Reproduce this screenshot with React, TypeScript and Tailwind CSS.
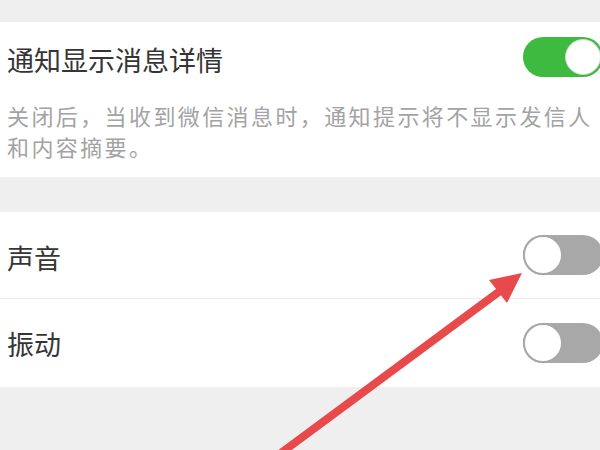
import React from "react";

type ToggleProps = { on: boolean };

// iOS-style switch, cut off by the right edge of the screen
function Toggle({ on }: ToggleProps): React.ReactElement {
  if (on) {
    return (
      <div className="ml-auto mr-[-3px] flex h-[40px] w-[80px] shrink-0 items-center justify-end rounded-full bg-[#3dba3f] pr-[2px]">
        <div className="h-[36px] w-[36px] rounded-full border border-[#cfd8cf] bg-white" />
      </div>
    );
  }
  return (
    <div className="ml-auto mr-[-3px] flex h-[40px] w-[80px] shrink-0 items-center rounded-full bg-[#a8a8a8]">
      <div className="h-[40px] w-[40px] rounded-full border-[2px] border-[#a8a8a8] bg-white" />
    </div>
  );
}

export default function App(): React.ReactElement {
  return (
    <div
      className="relative h-[450px] w-[600px] overflow-hidden bg-[#efefef] pt-[22px]"
      style={{ fontFamily: '"Noto Sans CJK SC", "Noto Sans", sans-serif' }}
    >
      {/* Notification details card */}
      <section className="h-[155px] bg-white pl-[7px]">
        <div className="flex items-start">
          <span className="mt-[24px] text-[27px] leading-[28px] text-[#353535]">通知显示消息详情</span>
          <div className="mt-[15px] ml-auto">
            <Toggle on />
          </div>
        </div>
        <p className="mt-[23px] pr-0 text-[22px] leading-[31px] tracking-[2.4px] text-[#a3a3a3]">
          关闭后，当收到微信消息时，通知提示将不显示发信人和内容摘要。
        </p>
      </section>

      {/* Sound / vibration card */}
      <section className="mt-[35px] bg-white">
        <div className="flex h-[86px] items-center pl-[7px]">
          <span className="mt-[6px] text-[27px] leading-[28px] text-[#353535]">声音</span>
          <Toggle on={false} />
        </div>
        <div className="flex h-[89px] items-center border-t border-[#ededed] pl-[7px]">
          <span className="mt-[2px] text-[27px] leading-[28px] text-[#353535]">振动</span>
          <Toggle on={false} />
        </div>
      </section>

      {/* Red annotation arrow */}
      <svg className="pointer-events-none absolute inset-0" width="600" height="450" viewBox="0 0 600 450">
        <line x1="281" y1="453" x2="500" y2="291" stroke="#e84a4b" strokeWidth="8" />
        <polygon points="522,273 489,280 507,303" fill="#e84a4b" />
      </svg>
    </div>
  );
}
